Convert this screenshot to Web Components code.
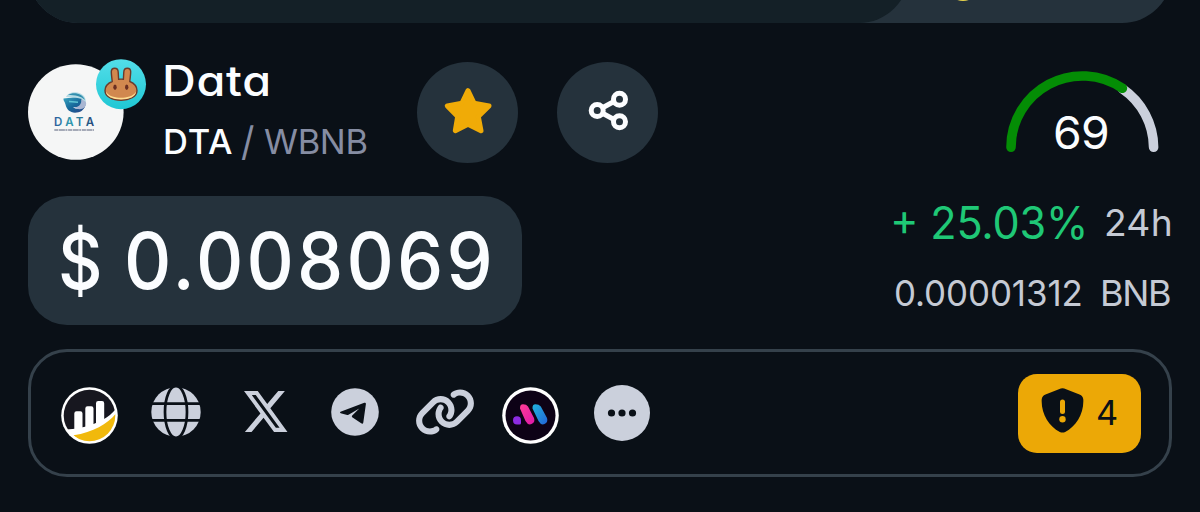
<!DOCTYPE html>
<html lang="en">
<head>
<meta charset="utf-8">
<title>Data (DTA) / WBNB</title>
<style>
html,body{margin:0;height:100%;background:#0a1017}
body{overflow:hidden;font-family:Inter,"Open Sans",sans-serif;color:#fbfdff}
</style>
</head>
<body>
<token-page></token-page>
<script>
function define(name, html, Base = HTMLElement) {
  const t = document.createElement('template');
  t.innerHTML = html;
  customElements.define(name, class extends Base {
    constructor() {
      super();
      this.attachShadow({ mode: 'open' }).append(t.content.cloneNode(true));
    }
  });
}

/* Single line of text whose box is its ink width (w) by its cap height; k stretches the glyphs. */
class FitText extends HTMLElement {
  connectedCallback() {
    const w = +this.getAttribute('w'), size = +this.getAttribute('size'), weight = this.getAttribute('weight') || 400;
    const root = this.shadowRoot || this.attachShadow({ mode: 'open' });
    root.innerHTML = `<style>
      :host{display:block;flex:none;width:${w}px;height:${size * 0.727}px;line-height:${size * 0.727}px;font-size:${size}px;font-weight:${weight};white-space:nowrap;font-feature-settings:"cv11" 1,"case" 1}
      span{display:inline-block;transform-origin:0 50%}
    </style><span></span>`;
    const s = root.querySelector('span'), text = this.getAttribute('text');
    s.textContent = text;
    const c = document.createElement('canvas').getContext('2d');
    c.font = `${weight} ${size}px Inter`;
    const a = c.measureText(text[0]), b = c.measureText(text[text.length - 1]);
    const left = -a.actualBoundingBoxLeft, right = b.width - b.actualBoundingBoxRight;
    const ink = s.getBoundingClientRect().width - left - right;
    const k = text.length > 1 ? +(this.getAttribute('k') || 1) : w / ink;
    if (text.length > 1) s.style.letterSpacing = (w / k - ink) / (text.length - 1) + 'px';
    s.style.marginLeft = -left * k + 'px';
    if (k !== 1) s.style.transform = `scaleX(${k})`;
  }
}
customElements.define('fit-text', FitText);

define('search-bar', `<style>
:host{display:flex;height:23px;overflow:hidden;flex:none}
.wrap{display:flex;align-items:flex-end;width:100%;height:123px;margin-top:-100px;background:#25323c;border-radius:50px;overflow:hidden;flex:none}
.field{width:881px;height:123px;border-radius:50px;background:#142027}
.coin{width:32px;height:32px;border-radius:50%;background:#e8d44d;margin:0 0 22px 38px}
</style><div class="wrap"><div class="field"></div><div class="coin"></div></div>`);

define('token-avatar', `<style>
:host{display:block;position:relative;width:96px;height:96px;flex:none}
svg{display:block}
.badge{position:absolute;left:67.5px;top:-5.5px}
</style>
<svg width="96" height="96" viewBox="0 0 96 96">
<defs><linearGradient id="g" x1="0" x2="1" y1="0" y2="1"><stop offset="0" stop-color="#38a3bf"/><stop offset=".5" stop-color="#16689a"/><stop offset="1" stop-color="#2d4388"/></linearGradient>
<linearGradient id="t" x1="0" x2="1"><stop offset="0" stop-color="#2b5b9b"/><stop offset=".4" stop-color="#2f9aaf"/><stop offset="1" stop-color="#254477"/></linearGradient></defs>
<circle cx="47.800" cy="48" r="47.800" fill="#f5f6f6"/>
<path d="M38 33C40 27.500 51 26 56 32 59 36 58.500 43 54 46 55 40 52 34 38 33Z" fill="#b5dbe5"/>
<path d="M40 31C46 27 55 30 57 36 53 32 47 31 40 31Z" fill="#328fae"/>
<path d="M35.500 34.500C43 33.500 49 33.500 54 35V41C52 43.500 48 43 45 43.500 50 46 54 44.500 57.500 41 56 46.500 52 48.700 47 48.700 42 48.500 38.500 45.500 37.500 40.500 37 38 35 36.500 35.500 34.500Z" fill="url(#g)"/>
<path d="M53 35C57 37 59.500 38 57.500 42 55 46 50 46 46 43.500 52 43 54 39 53 35Z" fill="#a9b6d2"/>
<path d="M41 37.500 50 38.300" stroke="#5ec4d4" stroke-width="1.500"/>
<text x="26" y="62" font-family="Inter,sans-serif" font-size="11.500" font-weight="600" fill="url(#t)" textLength="40">DATA</text>
<path d="M26.300 66H66" stroke="#8b91a3" stroke-width="1.300" stroke-dasharray="4 .6 6 .5 2 .7"/>
</svg>
<svg class="badge" width="51" height="51" viewBox="0 0 51 51">
<defs><linearGradient id="b" x2="0" y2="1"><stop stop-color="#53dee9"/><stop offset="1" stop-color="#1fc7d4"/></linearGradient></defs>
<circle cx="25" cy="25.200" r="25" fill="url(#b)"/>
<path d="M16.200 22.500C15.900 19 15.300 15.500 15.300 12.800 15.300 10.600 16.700 9.200 18.700 9.200 20.800 9.200 22.100 10.600 22.200 13L22.600 20.300Q25 20 27.400 20.300L27.800 13C27.900 10.600 29.200 9.200 31.300 9.200 33.300 9.200 34.700 10.600 34.700 12.800 34.700 15.500 34.100 19 33.800 22.500 38.500 24.500 41 28 41 31.500 41 37.800 33.500 41.300 25 41.300S9 37.800 9 31.500C9 28 11.500 24.500 16.200 22.500Z" fill="#d1884f" stroke="#6b3b2c" stroke-width="1.400"/>
<path d="M9.900 32.500C12.500 37.500 19.500 38.800 25 38.800S37.500 37.500 40.100 32.500C39.800 37.800 33 40.500 25 40.500S10.200 37.800 9.900 32.500Z" fill="#fedc90"/>
<ellipse cx="19" cy="28.200" rx="1.700" ry="2.700" fill="#6b2f22"/><ellipse cx="30.700" cy="28.200" rx="1.700" ry="2.700" fill="#6b2f22"/>
</svg>`);

define('round-button', `<style>
:host{display:flex;width:101px;height:101px;border-radius:50%;background:#25323c;flex:none}
</style><slot></slot>`);

define('star-icon', `<style>:host{display:block}svg{display:block}</style>
<svg width="101" height="101" viewBox="0 0 101 101"><path d="M51 28.700 57 41.200 72 43.900 61.300 54.500 64 68.700 51 62.300 38.300 68.700 40.700 54.500 30.300 43.900 45 41.200Z" fill="#f0ab07" stroke="#f0ab07" stroke-width="5" stroke-linejoin="round"/></svg>`);

define('share-icon', `<style>:host{display:block}svg{display:block}</style>
<svg width="101" height="101" viewBox="0 0 101 101" fill="none" stroke="#fcfdff" stroke-width="5"><path d="M46 45.500 57 39.500M46 51.500 57 57.500"/><circle cx="40.200" cy="48.500" r="6"/><circle cx="62.500" cy="37.300" r="6"/><circle cx="62.500" cy="59.800" r="6"/></svg>`);

define('score-gauge', `<style>
:host{display:grid;width:153px;height:82px;justify-items:center;flex:none}
svg,fit-text{grid-area:1/1}
fit-text{margin-top:46px;margin-right:2px}
</style>
<svg width="153" height="82" viewBox="0 0 153 82" fill="none" stroke-width="9.600" stroke-linecap="round"><path d="M116.400 17.700A71.300 71.300 0 0 1 147.600 76.300" stroke="#cbd0dc"/><path d="M5 76.300A71.300 71.300 0 0 1 116.400 17.300" stroke="#048d05"/></svg>
<fit-text text="69" w="52" size="44.500" k="1.04"></fit-text>`);

define('token-header', `<style>
:host{display:flex;align-items:flex-start;flex:none}
.names{margin:5px 0 0 41px;width:203px}
.pair{display:flex;align-items:center;margin-top:25.300px;height:40px}
.dim{color:#868da3}
.slash{margin:0 10px 0 9px}
round-button{margin:2.500px 0 0 49px}
round-button+round-button{margin-left:39px}
token-avatar{margin-top:5px}
score-gauge{margin:11.500px 13.500px 0 auto}
</style>
<token-avatar></token-avatar>
<div class="names"><fit-text text="Data" w="103.500" size="42.500" weight="500" k="1.1" style="margin-top:1.700px"></fit-text>
<div class="pair"><fit-text text="DTA" w="67" size="34.500" weight="500"></fit-text>
<fit-text class="dim slash" text="/" w="13" size="40"></fit-text>
<fit-text class="dim" text="WBNB" w="102.500" size="34.500"></fit-text></div></div>
<round-button><star-icon></star-icon></round-button><round-button><share-icon></share-icon></round-button>
<score-gauge></score-gauge>`);

define('price-row', `<style>
:host{display:flex;justify-content:space-between;flex:none;height:129px}
.price{display:flex;align-items:center;box-sizing:border-box;width:494px;padding-left:32.500px;gap:28.500px;background:#25323c;border-radius:39px}
.side{display:grid;justify-items:end;align-content:start;padding:11px 2px 0 0;gap:41px;color:#c5cad4}
.line{display:flex;align-items:center;gap:22.500px}
.up{color:#1fc876}
</style>
<div class="price"><fit-text text="$" w="38.500" size="77" weight="500"></fit-text><fit-text text="0.008069" w="361.500" size="79" weight="500" k=".93"></fit-text></div>
<div class="side">
<div class="line"><fit-text class="up" text="+ 25.03%" w="190" size="44.500" k=".97"></fit-text><fit-text text="24h" w="64" size="36.500" k="1.02" style="margin-top:1px"></fit-text></div>
<div class="line"><fit-text text="0.00001312" w="185" size="36" k=".97"></fit-text><fit-text text="BNB" w="67" size="36"></fit-text></div>
</div>`);

define('risk-badge', `<style>
:host{display:flex;align-items:center;box-sizing:border-box;width:123px;height:79px;border-radius:19px;background:#eca806;color:#0a1017;padding-left:22.500px;gap:14px;flex:none}
svg{display:block;margin-top:-6px}
</style>
<svg width="43" height="45" viewBox="0 0 43 45"><path d="M19.800.6Q21.500-.1 23.200.6L38.500 6.600Q42 8 42.300 11.500C43 26 35 38.500 24.200 43.900Q21.500 45.200 18.800 43.900C8 38.500 0 26 .7 11.500Q1 8 4.500 6.600Z" fill="#0a1017"/><path d="M21.500 14V23.500" stroke="#eca806" stroke-width="5" stroke-linecap="round"/><circle cx="21.500" cy="31.200" r="3.200" fill="#eca806"/></svg>
<fit-text text="4" w="19.500" size="33.500"></fit-text>`);

define('link-bar', `<style>
:host{display:flex;align-items:flex-start;box-sizing:border-box;height:128px;border:3px solid #35414b;border-radius:39px;padding:21.500px 28px 0 30px;flex:none}
svg{display:block;flex:none}
risk-badge{margin-left:auto}
</style>
<svg width="57" height="57" viewBox="0 0 57 57" style="margin-top:13.500px"><defs><clipPath id="c"><circle cx="28.500" cy="28.500" r="25.800"/></clipPath></defs><circle cx="28.500" cy="28.500" r="28.300" fill="#fff"/><g clip-path="url(#c)"><path d="M0 0H57V19C50 30 38 36 25 39.500 17 41.500 10 42.500 0 42.500Z" fill="#17171f"/><path d="M57 24C48 36 34 45 12.500 48.300L24 57H57Z" fill="#f1b90c"/><path d="M13.300 46V26.500Q13.300 24.200 15.500 24.200H19.300Q21.500 24.200 21.500 26.500V44ZM24.300 42V21.500Q24.300 19.200 26.500 19.200H30.300Q32.500 19.200 32.500 21.500V40ZM35 40V16.300Q35 14 37.200 14H41Q43.200 14 43.200 16.300V36Z" fill="#fff"/></g></svg>
<svg width="50" height="50" viewBox="0 0 50 50" style="margin:13.500px 0 0 33px"><circle cx="25" cy="25" r="24.700" fill="#cbd0dc"/><g fill="none" stroke="#0a1017" stroke-width="2.700"><ellipse cx="25" cy="25" rx="11" ry="26"/><path d="M0 16.700H50M0 33.400H50"/></g></svg>
<svg width="43.500" height="41" viewBox="1.250 2.250 21.600 19.500" preserveAspectRatio="none" style="margin:17.500px 0 0 43px"><path fill="#cbd0dc" d="M18.244 2.250h3.308l-7.227 8.260 8.502 11.240H16.170l-5.214-6.817L4.990 21.750H1.680l7.730-8.835L1.254 2.250H8.080l4.713 6.231zm-1.161 17.520h1.833L7.084 4.126H5.117z"/></svg>
<svg width="48" height="48" viewBox="0 0 48 48" style="margin:14px 0 0 43.500px"><circle cx="24" cy="24" r="23.800" fill="#cbd0dc"/><path d="M9.500 23.700 33.300 14.800Q35 14.300 34.900 16L32.300 34.500Q31.900 36.500 30.200 35.300L21.200 29.300Q20.400 28.500 21.200 27.500L28.300 20.500 17.500 26.700Q16.500 27.100 15.300 26.800L9.700 25.200Q8.300 24.500 9.500 23.700Z" fill="#0a1017"/></svg>
<svg width="58" height="46" viewBox="17 18 606 476" style="margin:15px 0 0 37px"><path fill="#cbd0dc" d="M579.800 267.700c56.500-56.500 56.500-148 0-204.500c-50-50-128.800-56.500-186.300-15.400l-1.600 1.100c-14.400 10.300-17.700 30.300-7.400 44.600s30.300 17.700 44.600 7.400l1.600-1.100c32.100-22.900 76-19.300 103.800 8.600c31.500 31.500 31.500 82.500 0 114L422.300 334.800c-31.500 31.500-82.500 31.500-114 0c-27.900-27.900-31.500-71.800-8.600-103.800l1.100-1.600c10.300-14.400 6.900-34.400-7.400-44.600s-34.400-6.900-44.600 7.400l-1.100 1.600C206.500 251.200 213 330 263 380c56.500 56.500 148 56.500 204.500 0L579.800 267.700zM60.200 244.300c-56.500 56.500-56.500 148 0 204.500c50 50 128.800 56.500 186.300 15.400l1.600-1.100c14.400-10.300 17.700-30.300 7.400-44.600s-30.300-17.700-44.600-7.400l-1.600 1.100c-32.100 22.900-76 19.300-103.800-8.600C74 372 74 321 105.500 289.500L217.700 177.200c31.500-31.500 82.500-31.500 114 0c27.900 27.900 31.500 71.800 8.600 103.900l-1.100 1.600c-10.300 14.400-6.900 34.400 7.400 44.600s34.400 6.900 44.600-7.400l1.100-1.600C433.500 260.800 427 182 377 132c-56.500-56.500-148-56.500-204.500 0L60.200 244.300z"/></svg>
<svg width="57" height="57" viewBox="0 0 57 57" style="margin:13.500px 0 0 28px"><defs><linearGradient id="p" x2="1" y2="1"><stop stop-color="#ff3d96"/><stop offset="1" stop-color="#dd18aa"/></linearGradient><linearGradient id="q" x2="1" y2="1"><stop stop-color="#20b4dd"/><stop offset="1" stop-color="#2364d8"/></linearGradient></defs><circle cx="28.500" cy="28.500" r="28.300" fill="#fff"/><circle cx="28.500" cy="28.500" r="25" fill="#0d0216"/><path d="M21 17.200Q17.800 17.200 18 21.500L23.500 34Q26 38.500 29.500 37Q33.500 35.500 32 31L26 19.500Q24.500 17.200 21 17.200Z" fill="url(#p)"/><path d="M33.500 17.200Q30.200 17.200 30.500 21.500L36.500 34Q39 38.500 42.500 37Q46.300 35.500 45 31L38.800 19.500Q37 17.200 33.500 17.200Z" fill="url(#q)"/><path d="M11 33.200Q11 29.200 15 29.200Q19 29.200 19 33.200V36Q19 37.500 17.500 37.500H15Q11 37.500 11 33.200Z" fill="#8d2be2"/></svg>
<svg width="56" height="56" viewBox="0 0 56 56" style="margin:11px 0 0 34.500px"><circle cx="28" cy="28" r="28" fill="#cbd0dc"/><g fill="#0a1017"><circle cx="17.500" cy="28" r="3.600"/><circle cx="28" cy="28" r="3.600"/><circle cx="38.500" cy="28" r="3.600"/></g></svg>
<risk-badge></risk-badge>`);

define('token-page', `<style>
:host{display:flex;flex-direction:column;box-sizing:border-box;width:1200px;height:512px;padding:0 28px;overflow:hidden}
token-header{height:137px;margin-top:36px}
price-row{margin-bottom:24px}
</style><search-bar></search-bar><token-header></token-header><price-row></price-row><link-bar></link-bar>`);
</script>
</body>
</html>
